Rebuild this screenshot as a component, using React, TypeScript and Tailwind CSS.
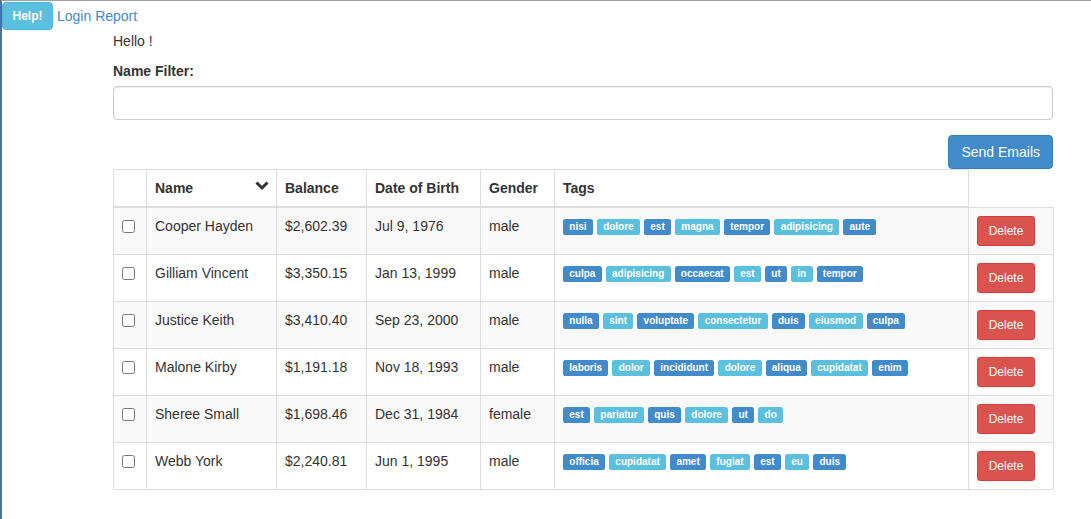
import React from "react";

type Row = {
  name: string;
  balance: string;
  dob: string;
  gender: string;
  tags: string[];
  striped: boolean;
};

const rows: Row[] = [
  { name: "Cooper Hayden", balance: "$2,602.39", dob: "Jul 9, 1976", gender: "male", tags: ["nisi", "dolore", "est", "magna", "tempor", "adipisicing", "aute"], striped: true },
  { name: "Gilliam Vincent", balance: "$3,350.15", dob: "Jan 13, 1999", gender: "male", tags: ["culpa", "adipisicing", "occaecat", "est", "ut", "in", "tempor"], striped: false },
  { name: "Justice Keith", balance: "$3,410.40", dob: "Sep 23, 2000", gender: "male", tags: ["nulla", "sint", "voluptate", "consectetur", "duis", "eiusmod", "culpa"], striped: true },
  { name: "Malone Kirby", balance: "$1,191.18", dob: "Nov 18, 1993", gender: "male", tags: ["laboris", "dolor", "incididunt", "dolore", "aliqua", "cupidatat", "enim"], striped: false },
  { name: "Sheree Small", balance: "$1,698.46", dob: "Dec 31, 1984", gender: "female", tags: ["est", "pariatur", "quis", "dolore", "ut", "do"], striped: true },
  { name: "Webb York", balance: "$2,240.81", dob: "Jun 1, 1995", gender: "male", tags: ["officia", "cupidatat", "amet", "fugiat", "est", "eu", "duis"], striped: false },
];

function Tag({ text, primary }: { text: string; primary: boolean }) {
  return (
    <span
      className={
        "inline-block text-white font-bold text-[10px] leading-none pt-[3px] pb-[3px] px-[6.3px] rounded-[2.6px] " +
        (primary ? "bg-[#428bca]" : "bg-[#5bc0de]")
      }
    >
      {text}
    </span>
  );
}

export default function App() {
  return (
    <div
      className="min-h-[519px] bg-white border-t border-t-[#a0a0a0] border-l-2 border-l-[#4a6fae] text-[#333] text-[14px] leading-[20px]"
      style={{ fontFamily: '"Liberation Sans", Arial, sans-serif' }}
    >
      <div className="flex items-center mt-[1px] h-[28px]">
        <button className="h-[28px] w-[51px] bg-[#5bc0de] border border-[#46b8da] rounded-[4px] text-white text-[12px] font-bold">
          Help!
        </button>
        <a className="ml-[4px] text-[#428bca]" href="#">
          Login Report
        </a>
      </div>
      <div className="ml-[111px] w-[940px]">
        <p className="mt-[1px] mb-[10px]">Hello !</p>
        <label className="block font-bold mb-[5px]">Name Filter:</label>
        <input
          type="text"
          className="block w-full h-[34px] border border-[#ccc] rounded-[4px] px-3 shadow-[inset_0_1px_1px_rgba(0,0,0,0.075)] outline-none"
        />
        <div className="flex justify-end mt-[15px]">
          <button className="h-[34px] px-[12px] bg-[#428bca] border border-[#357ebd] rounded-[4px] text-white text-[14px]">
            Send Emails
          </button>
        </div>
        <table className="w-[940px] table-fixed border-collapse">
          <colgroup>
            <col className="w-[33px]" />
            <col className="w-[130px]" />
            <col className="w-[90px]" />
            <col className="w-[114px]" />
            <col className="w-[74px]" />
            <col className="w-[414px]" />
            <col className="w-[85px]" />
          </colgroup>
          <thead>
            <tr>
              <th className="border border-[#ddd] border-b-2 p-[8px] align-bottom text-left"></th>
              <th className="border border-[#ddd] border-b-2 p-[8px] align-bottom text-left font-bold">
                <div className="flex items-center justify-between">
                  <span>Name</span>
                  <svg width="14" height="10" viewBox="0 0 14 10" className="mr-[-1px] mt-[-4px]">
                    <path d="M1.5 1.5 L7 7 L12.5 1.5" fill="none" stroke="#333" strokeWidth="3" strokeLinecap="butt" strokeLinejoin="miter" />
                  </svg>
                </div>
              </th>
              <th className="border border-[#ddd] border-b-2 p-[8px] align-bottom text-left font-bold">Balance</th>
              <th className="border border-[#ddd] border-b-2 p-[8px] align-bottom text-left font-bold">Date of Birth</th>
              <th className="border border-[#ddd] border-b-2 p-[8px] align-bottom text-left font-bold">Gender</th>
              <th className="border border-[#ddd] border-b-2 p-[8px] align-bottom text-left font-bold">Tags</th>
            </tr>
          </thead>
          <tbody>
            {rows.map((r, i) => (
              <tr key={i} className={r.striped ? "bg-[#f9f9f9]" : "bg-white"}>
                <td className="border border-[#ddd] p-[8px] align-top">
                  <input type="checkbox" className="block w-[13px] h-[13px] m-0 mt-[4px]" />
                </td>
                <td className="border border-[#ddd] p-[8px] align-top">{r.name}</td>
                <td className="border border-[#ddd] p-[8px] align-top">{r.balance}</td>
                <td className="border border-[#ddd] p-[8px] align-top">{r.dob}</td>
                <td className="border border-[#ddd] p-[8px] align-top">{r.gender}</td>
                <td className="border border-[#ddd] p-[8px] align-top">
                  <div className="flex flex-wrap gap-[4px] mt-[3px]">
                    {r.tags.map((t, j) => (
                      <Tag key={j} text={t} primary={j % 2 === 0} />
                    ))}
                  </div>
                </td>
                <td className="border border-[#ddd] p-[8px] align-top">
                  <button className="h-[30px] w-[58px] bg-[#d9534f] border border-[#d43f3a] rounded-[3px] text-white text-[12px]">
                    Delete
                  </button>
                </td>
              </tr>
            ))}
          </tbody>
        </table>
      </div>
    </div>
  );
}
